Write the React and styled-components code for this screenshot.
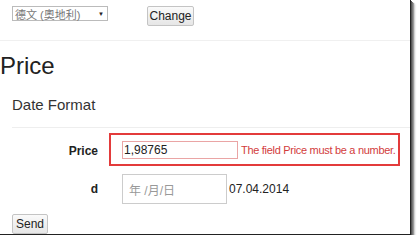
import React from 'react';
import styled, { createGlobalStyle } from 'styled-components';

const Global = createGlobalStyle`
  html, body {
    margin: 0;
    padding: 0;
    background: #fff;
    font-family: "Liberation Sans", Arial, sans-serif;
    color: #222;
  }
`;

const Frame = styled.div`
  width: 411px;
  height: 235px;
  background: #fff;
  border-right: 1px solid #222;
  border-bottom: 1px solid #222;
  box-shadow: 1px 1px 0 #555, 2px 2px 0 #777, 3px 3px 1px #999, 4px 4px 2px #ccc;
  overflow: hidden;
  box-sizing: border-box;
`;

const TopBar = styled.div`
  display: flex;
  align-items: flex-start;
  height: 41px;
  padding: 6px 0 0 12px;
  box-sizing: border-box;
  border-bottom: 1px solid #f0f0f0;
`;

const LangSelect = styled.div`
  width: 96px;
  height: 15px;
  border: 1px solid #bbb;
  box-sizing: border-box;
  display: flex;
  align-items: center;
  justify-content: space-between;
  padding: 0 3px 0 2px;
  font-size: 11px;
  color: #777;
  font-family: "Liberation Sans", "Noto Sans CJK TC", sans-serif;
  background: #fff;
`;

const Arrow = styled.span`
  font-size: 6px;
  color: #222;
`;

const Button = styled.button`
  margin-left: ${p => p.$offset || 0}px;
  width: ${p => p.$w}px;
  height: 20px;
  padding: 0;
  border: 1px solid #c4c4c4;
  border-radius: 2px;
  background: linear-gradient(#fafafa, #e6e6e6);
  font-family: "Liberation Sans", Arial, sans-serif;
  font-size: 12px;
  color: #222;
`;

const Title = styled.h1`
  margin: 11px 0 0 0;
  font-size: 24px;
  line-height: 28px;
  font-weight: normal;
  color: #222;
`;

const SubTitle = styled.h4`
  margin: 16px 0 0 12px;
  font-size: 15px;
  line-height: 18px;
  font-weight: normal;
  color: #333;
`;

const Rule = styled.div`
  margin: 13px 0 0 12px;
  border-top: 1px solid #eee;
`;

const Form = styled.div`
  display: flex;
  flex-direction: column;
  padding-top: 5px;
`;

const Row = styled.div`
  display: flex;
  align-items: center;
  margin-top: ${p => p.$mt || 0}px;
`;

const Label = styled.div`
  width: 98px;
  text-align: right;
  font-size: 12px;
  font-weight: bold;
  color: #222;
  margin-top: ${p => p.$dy || 0}px;
  margin-right: ${p => p.$mr || 11}px;
`;

const ErrorBox = styled.div`
  display: flex;
  align-items: center;
  width: 291px;
  height: 33px;
  box-sizing: border-box;
  border: 2px solid #e33b3b;
  padding-left: 11px;
  gap: 3px;
`;

const TextInput = styled.div`
  flex: 0 0 116px;
  height: 18px;
  box-sizing: border-box;
  border: 1px solid #eaa5a5;
  font-size: 12px;
  line-height: 16px;
  padding-left: 1px;
  color: #222;
`;

const ErrorText = styled.span`
  font-size: 11px;
  letter-spacing: -0.3px;
  color: #d23c3c;
  white-space: nowrap;
`;

const DateInput = styled.div`
  width: 105px;
  height: 30px;
  box-sizing: border-box;
  border: 1px solid #ccc;
  display: flex;
  align-items: center;
  padding-left: 6px;
  font-size: 12px;
  color: #999;
  font-family: "Liberation Sans", "Noto Sans CJK JP", sans-serif;
`;

const DateValue = styled.span`
  margin-left: 2px;
  font-size: 12px;
  color: #222;
`;

const Footer = styled.div`
  padding: 10px 0 0 12px;
`;

export default function App() {
  return (
    <>
      <Global />
      <Frame>
        <TopBar>
          <LangSelect>
            <span>德文 (奧地利)</span>
            <Arrow>▼</Arrow>
          </LangSelect>
          <Button $offset={39} $w={47}>Change</Button>
        </TopBar>
        <Title>Price</Title>
        <SubTitle>Date Format</SubTitle>
        <Rule />
        <Form>
          <Row>
            <Label $dy={3}>Price</Label>
            <ErrorBox>
              <TextInput>1,98765</TextInput>
              <ErrorText>The field Price must be a number.</ErrorText>
            </ErrorBox>
          </Row>
          <Row $mt={8}>
            <Label $mr={24}>d</Label>
            <DateInput>年 /月/日</DateInput>
            <DateValue>07.04.2014</DateValue>
          </Row>
        </Form>
        <Footer>
          <Button $w={36}>Send</Button>
        </Footer>
      </Frame>
    </>
  );
}
